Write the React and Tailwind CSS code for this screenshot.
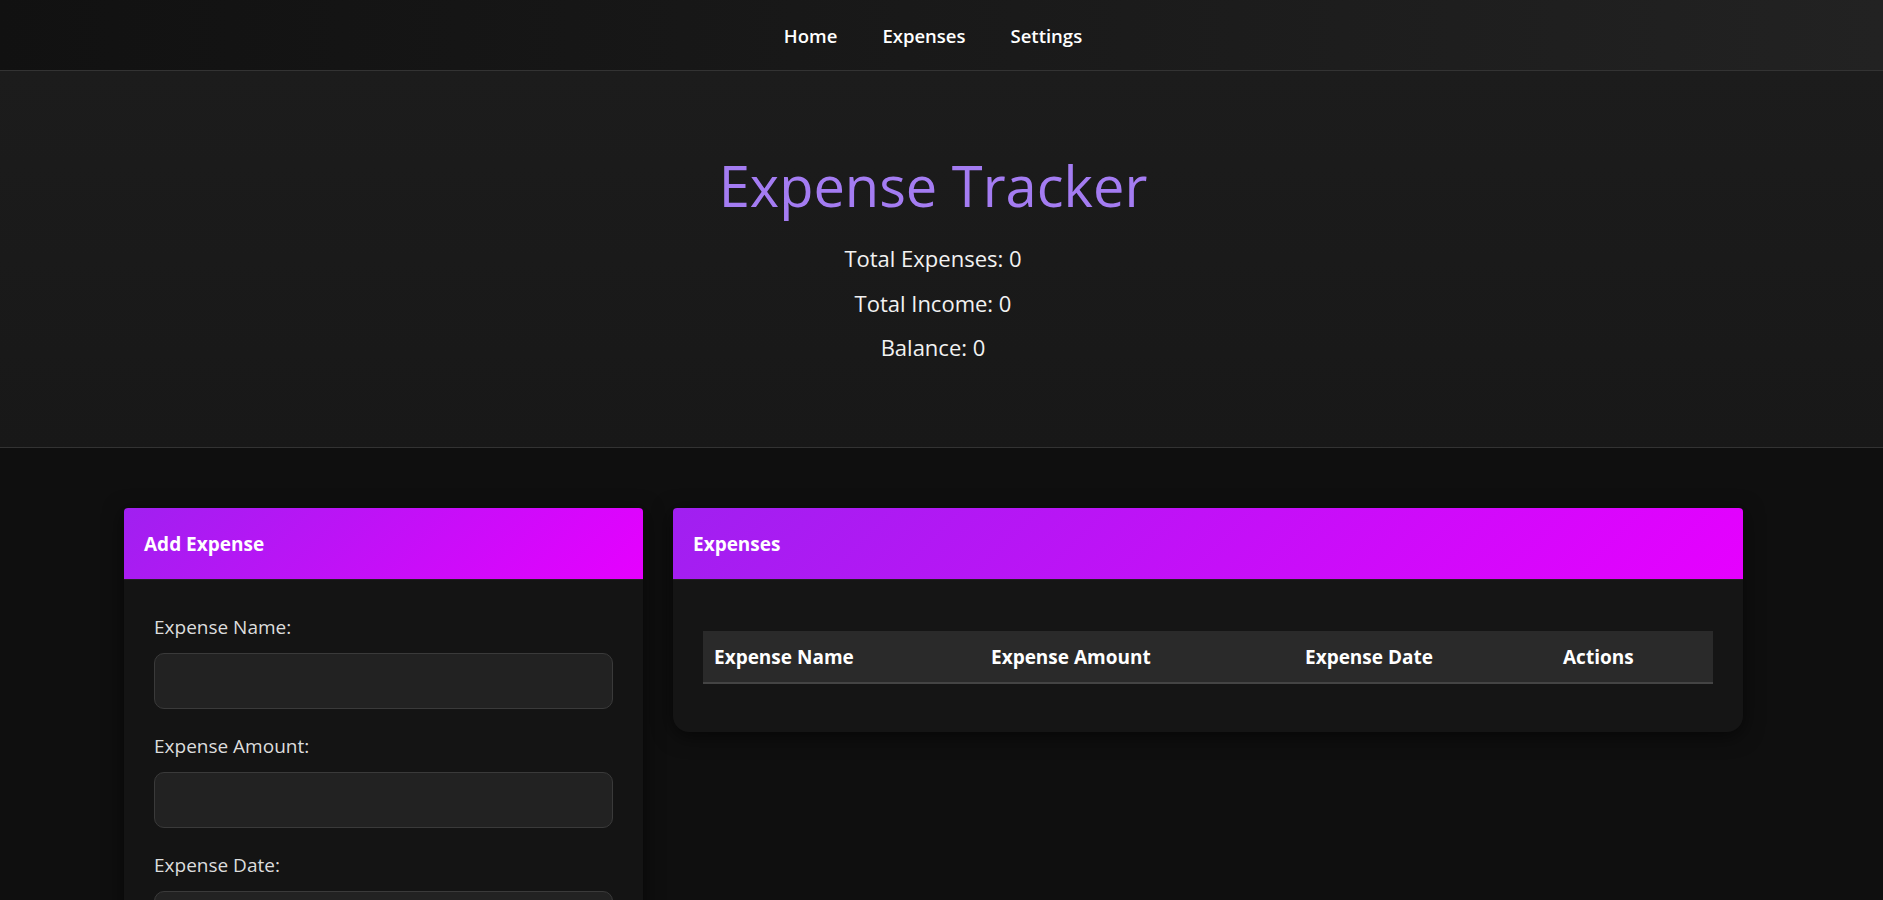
import { useState } from 'react';

function Field({ label, type = 'text', value, onChange }) {
  return (
    <div className="mb-[24px]">
      <label className="mb-[12px] block text-[19px] leading-[27px] text-[#dddddd]">{label}</label>
      <input
        type={type}
        value={value}
        onChange={onChange}
        className="block h-[56px] w-full rounded-[10px] border border-[#3a3a3a] bg-[#222222] px-4 text-[18px] text-white outline-none"
      />
    </div>
  );
}

function CardHeader({ title }) {
  return (
    <div className="flex h-[72px] items-center rounded-t-[4px] border-b border-[#222] bg-[linear-gradient(135deg,#a020f0_0%,#e600ff_100%)] pt-[2px] pl-[20px]">
      <h2 className="text-[19px] font-bold text-white">{title}</h2>
    </div>
  );
}

function App() {
  const [name, setName] = useState('');
  const [amount, setAmount] = useState('');
  const [date, setDate] = useState('');
  const [expenses] = useState([]);

  const total = expenses.reduce((sum, e) => sum + Number(e.amount), 0);

  return (
    <div className="h-[900px] overflow-hidden bg-[#0f0f0f] font-['Open_Sans',sans-serif] text-white">
      <nav className="h-[71px] border-b border-[#333] bg-linear-to-r from-[#111111] to-[#222222]">
        <ul className="flex h-full w-[1866px] items-center justify-center gap-[45px] pt-[2px] text-[18.5px] font-semibold">
          <li>Home</li>
          <li>Expenses</li>
          <li>Settings</li>
        </ul>
      </nav>

      <header className="h-[377px] border-b border-[#333] bg-linear-to-b from-[#1c1c1c] to-[#181818]">
        <div className="flex w-[1866px] flex-col items-center pt-[79px]">
          <h1 className="text-[56px] font-medium leading-[70px] text-[#a47cf2]">Expense Tracker</h1>
          <div className="mt-[16px] flex flex-col items-center text-[22px] leading-[44.5px] text-[#f2f2f2]">
            <p>Total Expenses: {total}</p>
            <p>Total Income: 0</p>
            <p>Balance: {0 - total}</p>
          </div>
        </div>
      </header>

      <main className="flex items-start gap-[30px] pl-[124px] pt-[60px]">
        <section className="w-[519px] rounded-t-[4px] bg-[#141414] shadow-[0_4px_20px_rgba(0,0,0,0.6)]">
          <CardHeader title="Add Expense" />
          <form className="px-[30px] pt-[34px] pb-[30px]" onSubmit={(e) => e.preventDefault()}>
            <Field label="Expense Name:" value={name} onChange={(e) => setName(e.target.value)} />
            <Field label="Expense Amount:" type="number" value={amount} onChange={(e) => setAmount(e.target.value)} />
            <Field label="Expense Date:" type="text" value={date} onChange={(e) => setDate(e.target.value)} />
            <button type="submit" className="h-[50px] w-full rounded-[10px] bg-[#a020f0] font-bold">
              Add Expense
            </button>
          </form>
        </section>

        <section className="w-[1070px] rounded-t-[4px] rounded-b-[16px] bg-[#151515] shadow-[0_4px_20px_rgba(0,0,0,0.6)]">
          <CardHeader title="Expenses" />
          <div className="px-[30px] pt-[51px] pb-[48px]">
            <table className="w-full border-collapse">
              <thead>
                <tr className="border-b-2 border-[#444] bg-[#2a2a2a] text-left text-[19px] font-bold">
                  <th className="h-[52px] w-[277px] px-[11px] pt-[2px]">Expense Name</th>
                  <th className="h-[52px] w-[314px] px-[11px] pt-[2px]">Expense Amount</th>
                  <th className="h-[52px] w-[258px] px-[11px] pt-[2px]">Expense Date</th>
                  <th className="h-[52px] px-[11px] pt-[2px]">Actions</th>
                </tr>
              </thead>
              <tbody>
                {expenses.map((e) => (
                  <tr key={e.id}>
                    <td>{e.name}</td>
                    <td>{e.amount}</td>
                    <td>{e.date}</td>
                    <td></td>
                  </tr>
                ))}
              </tbody>
            </table>
          </div>
        </section>
      </main>
    </div>
  );
}

export default App;
